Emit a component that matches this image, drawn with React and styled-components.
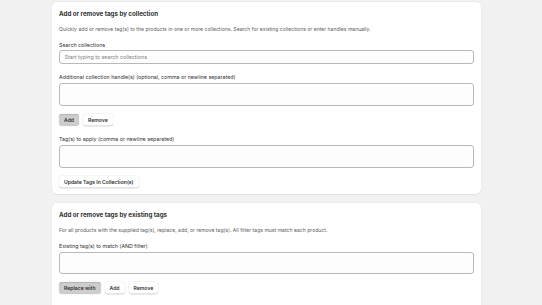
import React from "react";
import styled, { createGlobalStyle, css } from "styled-components";

const Global = createGlobalStyle`
  html, body { margin: 0; padding: 0; background: #f1f1f1; overflow: hidden; }
  body { font-family: Inter, "Noto Sans", "Liberation Sans", sans-serif; color: #303030; }
  * { box-sizing: border-box; }
`;

const Page = styled.div`
  display: flex;
  flex-direction: column;
  gap: 9px;
  padding: 2px 0 0 52px;
  width: 481px;
`;

const Card = styled.section`
  background: #ffffff;
  border-radius: 5px;
  box-shadow: 0 0.5px 0 rgba(26, 26, 26, 0.08), 0 0 0 0.4px rgba(26, 26, 26, 0.05);
  padding: 7px 7px ${(p) => p.$pb || 6.3}px 7px;
  display: flex;
  flex-direction: column;
`;

const Title = styled.h2`
  margin: 0;
  font-size: 6.2px;
  line-height: 10px;
  font-weight: 700;
  color: #303030;
`;

const Description = styled.p`
  margin: 6px 0 0;
  font-size: 5.1px;
  line-height: 8px;
  color: #616161;
  white-space: nowrap;
`;

const Field = styled.div`
  display: flex;
  flex-direction: column;
  margin-top: ${(p) => p.$mt}px;
`;

const Label = styled.label`
  font-size: 5.3px;
  line-height: 8px;
  color: #303030;
  margin-bottom: 1.6px;
`;

const inputBase = css`
  width: 100%;
  border: 0.7px solid #b9b9b9;
  border-radius: 3px;
  background: #fdfdfd;
  font-family: inherit;
  color: #303030;
  outline: none;
`;

const TextInput = styled.input`
  ${inputBase};
  height: 14.3px;
  padding: 0 4.5px;
  font-size: 5.3px;
  &::placeholder { color: #7d7d7d; }
`;

const TextArea = styled.textarea`
  ${inputBase};
  height: ${(p) => p.$h}px;
  resize: none;
  padding: 3px 4.5px;
  font-size: 5.3px;
  display: block;
`;

const ButtonRow = styled.div`
  display: flex;
  gap: 4px;
  margin-top: 8px;
`;

const Button = styled.button`
  height: 12px;
  padding: 0 5px;
  border: none;
  border-radius: 3px;
  font-family: inherit;
  font-size: 5.1px;
  font-weight: 600;
  line-height: 12px;
  color: #303030;
  cursor: pointer;
  ${(p) =>
    p.$pressed
      ? css`
          background: #cdcdcd;
          box-shadow: inset 0 0.6px 0.8px rgba(26, 26, 26, 0.25), 0 0 0 0.4px rgba(0, 0, 0, 0.06);
        `
      : css`
          background: #ffffff;
          box-shadow: inset 0 -0.5px 0 #c9c9c9, 0 0 0 0.5px rgba(0, 0, 0, 0.08),
            0 0.5px 0.6px rgba(0, 0, 0, 0.08);
        `}
`;

export default function App() {
  return (
    <>
      <Global />
      <Page>
        <Card>
          <Title>Add or remove tags by collection</Title>
          <Description>
            Quickly add or remove tag(s) to the products in one or more collections. Search for existing collections or enter handles manually.
          </Description>
          <Field $mt={7.5}>
            <Label>Search collections</Label>
            <TextInput placeholder="Start typing to search collections" />
          </Field>
          <Field $mt={9}>
            <Label>Additional collection handle(s) (optional, comma or newline separated)</Label>
            <TextArea $h={23.3} />
          </Field>
          <ButtonRow>
            <Button $pressed>Add</Button>
            <Button>Remove</Button>
          </ButtonRow>
          <Field $mt={9}>
            <Label>Tag(s) to apply (comma or newline separated)</Label>
            <TextArea $h={23.3} />
          </Field>
          <ButtonRow>
            <Button>Update Tags In Collection(s)</Button>
          </ButtonRow>
        </Card>
        <Card $pb={20}>
          <Title>Add or remove tags by existing tags</Title>
          <Description>
            For all products with the supplied tag(s), replace, add, or remove tag(s). All filter tags must match each product.
          </Description>
          <Field $mt={7.7}>
            <Label>Existing tag(s) to match (AND filter)</Label>
            <TextArea $h={22.6} />
          </Field>
          <ButtonRow>
            <Button $pressed>Replace with</Button>
            <Button>Add</Button>
            <Button>Remove</Button>
          </ButtonRow>
        </Card>
      </Page>
    </>
  );
}
